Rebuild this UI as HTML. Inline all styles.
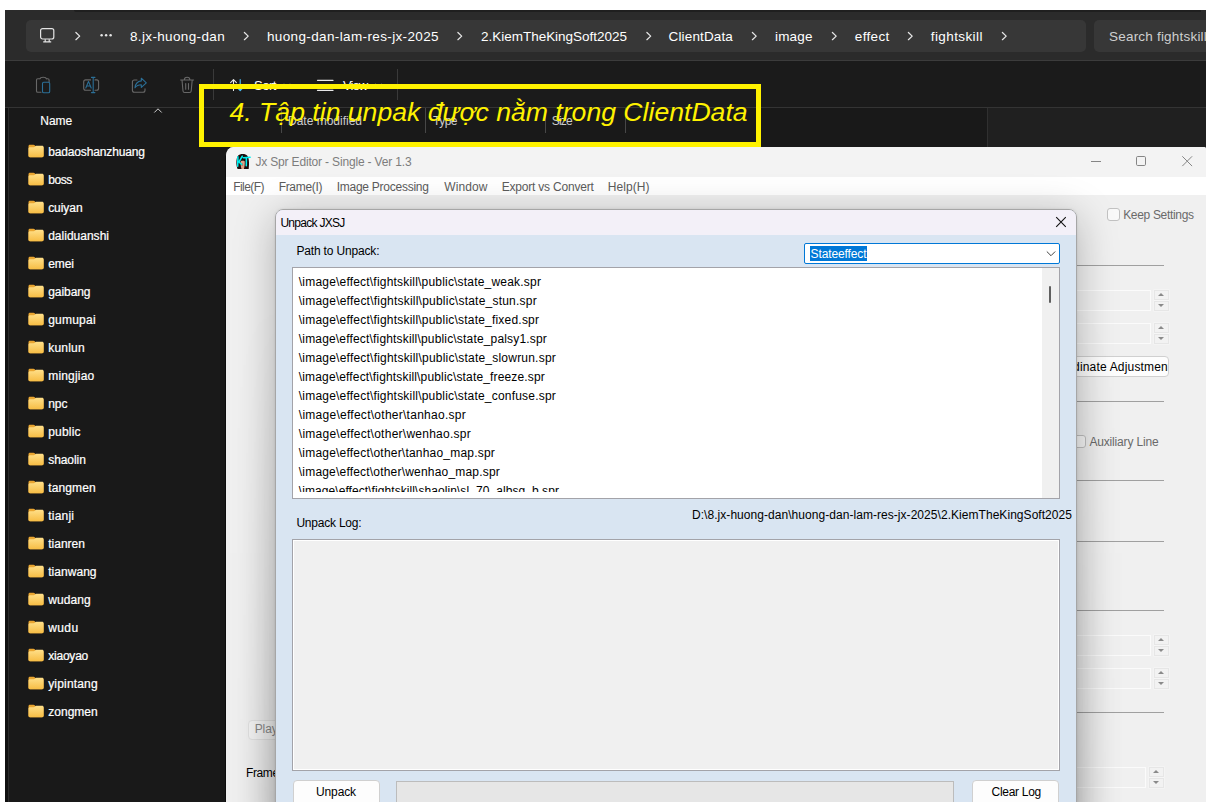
<!DOCTYPE html>
<html lang="vi">
<head>
<meta charset="utf-8">
<title>Jx Spr Editor - Unpack JXSJ</title>
<style>
*{box-sizing:border-box;margin:0;padding:0}
html,body{width:1215px;height:802px;overflow:hidden;background:#fff}
body{position:relative;font-family:"Liberation Sans",Arial,sans-serif;font-size:12px}
.abs{position:absolute}
.t{position:absolute;white-space:pre;line-height:1;font-family:"Liberation Sans",Arial,sans-serif}
#exp{position:absolute;left:5px;top:10px;width:1201px;height:792px;background:#191919;overflow:hidden}
/* inside #exp we shift by (-5,-10) so children use page coords */
#expi{position:absolute;left:-5px;top:-10px;width:1215px;height:802px}
#topbar{left:5px;top:10px;width:1201px;height:50px;background:#2b2b2b}
#tabshade{left:74px;top:10px;width:1127px;height:2px;background:#1f1f1f;border-radius:0 0 0 6px}
#pill{left:26px;top:20px;width:1060px;height:32px;background:#373737;border-radius:5px}
#search{left:1094px;top:20px;width:130px;height:32px;background:#373737;border-radius:5px}
#l60{left:5px;top:60px;width:1201px;height:1px;background:#3c3c3c}
#toolbar{left:5px;top:61px;width:1201px;height:46px;background:#1b1b1b}
#l107{left:5px;top:107px;width:1201px;height:1px;background:#343434}
#lstrip{left:5px;top:108px;width:3px;height:700px;background:#101010}
#lstripl{left:8px;top:108px;width:1px;height:700px;background:#2a2a2a}
#preview{left:987px;top:108px;width:220px;height:50px;background:#202020;border-left:1px solid #303030}
.vsep{position:absolute;width:1px;background:#3a3a3a}
.csep{position:absolute;width:1px;background:#474747;top:108px;height:25px}
.fold{position:absolute;left:28px;width:16px;height:14px}
#ybox{position:absolute;left:198.800px;top:84px;width:562.400px;height:62.7px;border:5px solid #fff200}
#ytext{position:absolute;left:229.500px;top:99px;font:italic 26.620px "Liberation Sans",Arial,sans-serif;color:#fff200;white-space:pre;line-height:1;letter-spacing:0}
#app{position:absolute;left:224.7px;top:147px;width:981.3px;height:655px;background:#f0f0f0;border-radius:8.5px 2px 0 0;overflow:hidden;border-left:1.3px solid #0d0d0d}
#appi{position:absolute;left:-226px;top:-147px;width:1215px;height:802px}
#apptitle{left:226px;top:147px;width:980px;height:30px;background:#f3f3f3}
#appmenu{left:226px;top:177px;width:980px;height:18px;background:#fff}
.hl{position:absolute;height:1px;background:#a0a0a0;left:1076px}
.spf{position:absolute;height:21px;border:1px solid #fbfbfb;background:transparent;left:1000px}
.spb{position:absolute;width:14.500px;height:9.500px;border:1px solid #e6e6e6;background:#f2f2f2;box-shadow:0 0 0 .5px #f8f8f8}
.spb i{position:absolute;left:3.3px;width:0;height:0;border-left:3px solid transparent;border-right:3px solid transparent;box-sizing:content-box}
.spb.u i{top:1.800px;border-bottom:3.600px solid #8a8a8a}
.spb.d i{top:2.200px;border-top:3.600px solid #8a8a8a}
.cb{position:absolute;width:13px;height:13px;border:1px solid #c2c2c2;border-radius:3px;background:#f9f9f9}
#dlg{position:absolute;left:275px;top:209px;width:802px;height:620px;background:#d9e5f2;border:1px solid #a6a6a6;border-radius:8px;overflow:hidden}
#dlgsh{position:absolute;left:275px;top:209px;width:802px;height:620px;border-radius:8px;box-shadow:0 8px 40px rgba(0,0,0,.27),0 0 3px rgba(0,0,0,.10)}
.shx{position:absolute;top:209px;width:50px;height:593px;-webkit-mask-image:linear-gradient(to bottom,transparent 16%,#000 100%);mask-image:linear-gradient(to bottom,transparent 16%,#000 100%)}
#shl{left:225px;background:linear-gradient(to right,rgba(0,0,0,0) 0,rgba(0,0,0,.005) 20%,rgba(0,0,0,.014) 40%,rgba(0,0,0,.034) 60%,rgba(0,0,0,.066) 80%,rgba(0,0,0,.105) 100%)}
#shr{left:1077px;background:linear-gradient(to left,rgba(0,0,0,0) 0,rgba(0,0,0,.005) 20%,rgba(0,0,0,.014) 40%,rgba(0,0,0,.034) 60%,rgba(0,0,0,.066) 80%,rgba(0,0,0,.105) 100%)}
#dlgi{position:absolute;left:-276px;top:-210px;width:1215px;height:802px}
#dlgtitle{left:276px;top:209px;width:801px;height:26px;background:#f3f0f8}
#combo{left:804px;top:243px;width:256px;height:21px;background:#fff;border:1px solid #0078d7;border-radius:2px}
#sel{left:810px;top:246px;width:57px;height:15px;background:#0078d7}
#list{left:292px;top:266.5px;width:768px;height:232px;background:#fff;border:1px solid #a3a3a9}
#listclip{position:absolute;left:293px;top:267.5px;width:748px;height:224px;overflow:hidden}
#sbtrack{left:1042px;top:267.5px;width:17px;height:230px;background:#f0f0f0}
#sbthumb{left:1049px;top:286px;width:2px;height:17px;background:#606060;border-radius:1px}
#log{left:292px;top:539px;width:768px;height:231.5px;background:#f0f0f0;border:1px solid #a3a3a9;box-shadow:inset 0 0 0 1px #fff}
.btn{position:absolute;background:#fdfdfd;border:1px solid #d0d0d0;border-radius:4px}
#prog{left:396px;top:781px;width:558px;height:30px;background:#e6e6e6;border:1px solid #bcbcbc}
</style>
</head>
<body>

<!-- ===================== File Explorer (dark) ===================== -->
<div id="exp"><div id="expi">
  <div class="abs" id="topbar"></div>
  <div class="abs" id="tabshade"></div>
  <div class="abs" id="pill"></div>
  <div class="abs" id="search"></div>
  <div class="abs" id="l60"></div>
  <div class="abs" id="toolbar"></div>
  <div class="abs" id="l107"></div>
  <div class="abs" id="lstrip"></div>
  <div class="abs" id="lstripl"></div>
  <div class="abs" id="preview"></div>

  <!-- monitor icon -->
  <svg class="abs" style="left:39px;top:27px" width="17" height="17" viewBox="0 0 17 17" fill="none" stroke="#e4e4e4" stroke-width="1.2">
    <rect x="1.6" y="1.6" width="13.2" height="10.4" rx="2"/>
    <path d="M6.2 12.2v2.4M10.2 12.2v2.4M4.2 14.9h8"/>
  </svg>
  <!-- breadcrumb chevrons -->
  <svg class="abs" style="left:0;top:0" width="1215" height="60" fill="none" stroke="#e6e6e6" stroke-width="1.25" stroke-linecap="round" stroke-linejoin="round">
    <path d="M75.9 32.5l3.8 3.6-3.8 3.6"/>
    <path d="M244.4 32.5l3.8 3.6-3.8 3.6"/>
    <path d="M457.9 32.5l3.8 3.6-3.8 3.6"/>
    <path d="M646.9 32.5l3.8 3.6-3.8 3.6"/>
    <path d="M752.4 32.5l3.8 3.6-3.8 3.6"/>
    <path d="M832.4 32.5l3.8 3.6-3.8 3.6"/>
    <path d="M908.4 32.5l3.8 3.6-3.8 3.6"/>
    <path d="M1002.4 32.5l3.8 3.6-3.8 3.6"/>
    <g fill="#e6e6e6" stroke="none"><circle cx="101.6" cy="35.200" r="1.25"/><circle cx="106.1" cy="35.200" r="1.25"/><circle cx="110.6" cy="35.200" r="1.25"/></g>
  </svg>

  <!-- toolbar icons (disabled look) -->
  <svg class="abs" style="left:0;top:61px" width="420" height="46" fill="none" stroke-width="1.1" stroke-linecap="round" stroke-linejoin="round">
    <!-- paste -->
    <g stroke="#686868"><path d="M41 31.3h-3.2a1.3 1.3 0 0 1-1.3-1.3V19a1.3 1.3 0 0 1 1.3-1.3h1.7M46.5 17.7h1.3a1.3 1.3 0 0 1 1.3 1.3v2"/><path d="M40 17.8c.2-1.2 1.2-1.6 3.2-1.6s3 .4 3.2 1.6"/></g>
    <rect x="42.5" y="21.3" width="7.2" height="10.4" rx="1.3" stroke="#2b6f97"/>
    <!-- rename -->
    <g stroke="#686868"><path d="M90.5 29.2h-4.8a2 2 0 0 1-2-2v-6.3a2 2 0 0 1 2-2h4.8M95 18.9h1.6a2 2 0 0 1 2 2v6.3a2 2 0 0 1-2 2H95"/></g>
    <g stroke="#2b6f97"><path d="M91.5 16.4h3.4M91.5 31.6h3.4M93.2 16.4v15.2"/><path d="M85.8 27l2.7-6.6L91.2 27M86.7 25h3.6"/></g>
    <!-- share -->
    <g stroke="#686868"><path d="M137 19h-2.6a2 2 0 0 0-2 2v8.2a2 2 0 0 0 2 2h8.6a2 2 0 0 0 2-2v-1.4"/></g>
    <path d="M141.3 17.2l5 4.6-5 4.6v-2.7c-3 0-4.800.9-6.300 3.100.4-3.900 2.500-6.500 6.300-6.900z" stroke="#2b6f97"/>
    <!-- trash -->
    <g stroke="#686868"><path d="M180.600 19h13M184.300 19c0-1.900 1-2.800 2.800-2.800s2.800.9 2.800 2.800M182 19l1 11c.1 1 .7 1.500 1.600 1.500h5c.9 0 1.500-.5 1.600-1.500l1-11M185.700 22.500v5.800M188.500 22.500v5.800"/></g>
    <!-- sort -->
    <path d="M233.500 29.500V18.800M230.600 21.700l2.900-3 2.900 3" stroke="#e8e8e8"/>
    <path d="M240.200 18.500v11M237.300 26.600l2.900 3 2.900-3" stroke="#4cc2ff"/>
    <path d="M284.500 23l2.500 2.500 2.500-2.500M376 23l2.500 2.500 2.500-2.500" stroke="#9a9a9a" stroke-width="1"/>
    <!-- view -->
    <path d="M317.500 19.300h15.500M317.500 24.300h15.500M317.500 29.300h15.500" stroke="#e8e8e8" stroke-width="1.300"/>
  </svg>
  <div class="vsep" style="left:213px;top:69px;height:31px"></div>
  <div class="vsep" style="left:397px;top:69px;height:31px"></div>
  <!-- column sort chevron -->
  <svg class="abs" style="left:152px;top:106px" width="12" height="8" fill="none" stroke="#cfcfcf" stroke-width="1"><path d="M2.300 6.500l3.700-3.700 3.700 3.700"/></svg>
  <div class="csep" style="left:281px"></div>
  <div class="csep" style="left:425px"></div>
  <div class="csep" style="left:545px"></div>
  <div class="csep" style="left:625px"></div>

  <svg class="fold" style="top:143.5px" viewBox="0 0 16 14"><defs><linearGradient id="fg0" x1="0" y1="0" x2="0" y2="1"><stop offset="0" stop-color="#ffe08a"/><stop offset="1" stop-color="#f7bd45"/></linearGradient></defs><path d="M0.500 2.200C0.500 1.400 1.100 0.800 1.900 0.800h3.600c.5 0 .9.200 1.200.5l1.200 1.300h6.300c.8 0 1.400.6 1.400 1.400v7.800c0 .8-.6 1.400-1.400 1.400H1.900c-.8 0-1.400-.6-1.400-1.400z" fill="#e9a530"/><path d="M0.500 4.700c0-.8.600-1.400 1.400-1.400h3.800c.4 0 .8-.2 1.100-.5l.6-.6c.3-.3.700-.4 1.100-.4h5.700c.8 0 1.400.6 1.400 1.400v8.600c0 .8-.6 1.400-1.400 1.400H1.900c-.8 0-1.400-.6-1.400-1.400z" fill="url(#fg0)"/></svg>
<svg class="fold" style="top:171.5px" viewBox="0 0 16 14"><defs><linearGradient id="fg1" x1="0" y1="0" x2="0" y2="1"><stop offset="0" stop-color="#ffe08a"/><stop offset="1" stop-color="#f7bd45"/></linearGradient></defs><path d="M0.500 2.200C0.500 1.400 1.100 0.800 1.900 0.800h3.600c.5 0 .9.200 1.200.5l1.200 1.300h6.300c.8 0 1.400.6 1.400 1.400v7.800c0 .8-.6 1.400-1.400 1.400H1.900c-.8 0-1.400-.6-1.400-1.400z" fill="#e9a530"/><path d="M0.500 4.700c0-.8.600-1.400 1.400-1.400h3.800c.4 0 .8-.2 1.100-.5l.6-.6c.3-.3.700-.4 1.100-.4h5.700c.8 0 1.400.6 1.400 1.400v8.600c0 .8-.6 1.400-1.400 1.400H1.900c-.8 0-1.400-.6-1.400-1.400z" fill="url(#fg1)"/></svg>
<svg class="fold" style="top:199.5px" viewBox="0 0 16 14"><defs><linearGradient id="fg2" x1="0" y1="0" x2="0" y2="1"><stop offset="0" stop-color="#ffe08a"/><stop offset="1" stop-color="#f7bd45"/></linearGradient></defs><path d="M0.500 2.200C0.500 1.400 1.100 0.800 1.900 0.800h3.600c.5 0 .9.200 1.200.5l1.200 1.300h6.300c.8 0 1.400.6 1.400 1.400v7.800c0 .8-.6 1.400-1.400 1.400H1.900c-.8 0-1.400-.6-1.400-1.400z" fill="#e9a530"/><path d="M0.500 4.700c0-.8.600-1.400 1.400-1.400h3.800c.4 0 .8-.2 1.100-.5l.6-.6c.3-.3.700-.4 1.100-.4h5.700c.8 0 1.400.6 1.400 1.400v8.600c0 .8-.6 1.400-1.400 1.400H1.900c-.8 0-1.400-.6-1.400-1.400z" fill="url(#fg2)"/></svg>
<svg class="fold" style="top:227.5px" viewBox="0 0 16 14"><defs><linearGradient id="fg3" x1="0" y1="0" x2="0" y2="1"><stop offset="0" stop-color="#ffe08a"/><stop offset="1" stop-color="#f7bd45"/></linearGradient></defs><path d="M0.500 2.200C0.500 1.400 1.100 0.800 1.900 0.800h3.600c.5 0 .9.200 1.200.5l1.200 1.300h6.300c.8 0 1.400.6 1.400 1.400v7.800c0 .8-.6 1.400-1.400 1.400H1.900c-.8 0-1.400-.6-1.400-1.400z" fill="#e9a530"/><path d="M0.500 4.700c0-.8.600-1.400 1.400-1.400h3.800c.4 0 .8-.2 1.100-.5l.6-.6c.3-.3.700-.4 1.100-.4h5.700c.8 0 1.400.6 1.400 1.400v8.600c0 .8-.6 1.400-1.400 1.400H1.900c-.8 0-1.400-.6-1.400-1.400z" fill="url(#fg3)"/></svg>
<svg class="fold" style="top:255.5px" viewBox="0 0 16 14"><defs><linearGradient id="fg4" x1="0" y1="0" x2="0" y2="1"><stop offset="0" stop-color="#ffe08a"/><stop offset="1" stop-color="#f7bd45"/></linearGradient></defs><path d="M0.500 2.200C0.500 1.400 1.100 0.800 1.900 0.800h3.600c.5 0 .9.200 1.200.5l1.200 1.300h6.300c.8 0 1.400.6 1.400 1.400v7.800c0 .8-.6 1.400-1.400 1.400H1.900c-.8 0-1.400-.6-1.400-1.400z" fill="#e9a530"/><path d="M0.500 4.700c0-.8.600-1.400 1.400-1.400h3.800c.4 0 .8-.2 1.100-.5l.6-.6c.3-.3.700-.4 1.100-.4h5.700c.8 0 1.400.6 1.400 1.400v8.600c0 .8-.6 1.400-1.400 1.400H1.900c-.8 0-1.400-.6-1.400-1.400z" fill="url(#fg4)"/></svg>
<svg class="fold" style="top:283.5px" viewBox="0 0 16 14"><defs><linearGradient id="fg5" x1="0" y1="0" x2="0" y2="1"><stop offset="0" stop-color="#ffe08a"/><stop offset="1" stop-color="#f7bd45"/></linearGradient></defs><path d="M0.500 2.200C0.500 1.400 1.100 0.800 1.900 0.800h3.600c.5 0 .9.200 1.200.5l1.200 1.300h6.300c.8 0 1.400.6 1.400 1.400v7.800c0 .8-.6 1.400-1.400 1.400H1.900c-.8 0-1.400-.6-1.400-1.400z" fill="#e9a530"/><path d="M0.500 4.700c0-.8.600-1.400 1.400-1.400h3.800c.4 0 .8-.2 1.100-.5l.6-.6c.3-.3.700-.4 1.100-.4h5.700c.8 0 1.400.6 1.400 1.400v8.600c0 .8-.6 1.400-1.400 1.400H1.900c-.8 0-1.400-.6-1.400-1.400z" fill="url(#fg5)"/></svg>
<svg class="fold" style="top:311.5px" viewBox="0 0 16 14"><defs><linearGradient id="fg6" x1="0" y1="0" x2="0" y2="1"><stop offset="0" stop-color="#ffe08a"/><stop offset="1" stop-color="#f7bd45"/></linearGradient></defs><path d="M0.500 2.200C0.500 1.400 1.100 0.800 1.900 0.800h3.600c.5 0 .9.200 1.200.5l1.200 1.300h6.300c.8 0 1.400.6 1.400 1.400v7.800c0 .8-.6 1.400-1.400 1.400H1.900c-.8 0-1.400-.6-1.400-1.400z" fill="#e9a530"/><path d="M0.500 4.700c0-.8.600-1.400 1.400-1.400h3.800c.4 0 .8-.2 1.100-.5l.6-.6c.3-.3.700-.4 1.100-.4h5.700c.8 0 1.400.6 1.400 1.400v8.600c0 .8-.6 1.400-1.400 1.400H1.900c-.8 0-1.400-.6-1.400-1.400z" fill="url(#fg6)"/></svg>
<svg class="fold" style="top:339.5px" viewBox="0 0 16 14"><defs><linearGradient id="fg7" x1="0" y1="0" x2="0" y2="1"><stop offset="0" stop-color="#ffe08a"/><stop offset="1" stop-color="#f7bd45"/></linearGradient></defs><path d="M0.500 2.200C0.500 1.400 1.100 0.800 1.900 0.800h3.600c.5 0 .9.200 1.200.5l1.200 1.300h6.300c.8 0 1.400.6 1.400 1.400v7.800c0 .8-.6 1.400-1.400 1.400H1.900c-.8 0-1.400-.6-1.400-1.400z" fill="#e9a530"/><path d="M0.500 4.700c0-.8.600-1.400 1.400-1.400h3.800c.4 0 .8-.2 1.100-.5l.6-.6c.3-.3.700-.4 1.100-.4h5.700c.8 0 1.400.6 1.400 1.400v8.600c0 .8-.6 1.400-1.400 1.400H1.900c-.8 0-1.400-.6-1.400-1.400z" fill="url(#fg7)"/></svg>
<svg class="fold" style="top:367.5px" viewBox="0 0 16 14"><defs><linearGradient id="fg8" x1="0" y1="0" x2="0" y2="1"><stop offset="0" stop-color="#ffe08a"/><stop offset="1" stop-color="#f7bd45"/></linearGradient></defs><path d="M0.500 2.200C0.500 1.400 1.100 0.800 1.900 0.800h3.600c.5 0 .9.200 1.200.5l1.200 1.300h6.300c.8 0 1.400.6 1.400 1.400v7.800c0 .8-.6 1.400-1.400 1.400H1.900c-.8 0-1.400-.6-1.400-1.400z" fill="#e9a530"/><path d="M0.500 4.700c0-.8.600-1.400 1.400-1.400h3.800c.4 0 .8-.2 1.100-.5l.6-.6c.3-.3.700-.4 1.100-.4h5.700c.8 0 1.400.6 1.400 1.400v8.600c0 .8-.6 1.400-1.400 1.400H1.900c-.8 0-1.400-.6-1.400-1.400z" fill="url(#fg8)"/></svg>
<svg class="fold" style="top:395.5px" viewBox="0 0 16 14"><defs><linearGradient id="fg9" x1="0" y1="0" x2="0" y2="1"><stop offset="0" stop-color="#ffe08a"/><stop offset="1" stop-color="#f7bd45"/></linearGradient></defs><path d="M0.500 2.200C0.500 1.400 1.100 0.800 1.900 0.800h3.600c.5 0 .9.200 1.200.5l1.200 1.300h6.300c.8 0 1.400.6 1.400 1.400v7.800c0 .8-.6 1.400-1.400 1.400H1.900c-.8 0-1.400-.6-1.400-1.400z" fill="#e9a530"/><path d="M0.500 4.700c0-.8.600-1.400 1.400-1.400h3.800c.4 0 .8-.2 1.100-.5l.6-.6c.3-.3.700-.4 1.100-.4h5.700c.8 0 1.400.6 1.400 1.400v8.600c0 .8-.6 1.400-1.400 1.400H1.900c-.8 0-1.400-.6-1.400-1.400z" fill="url(#fg9)"/></svg>
<svg class="fold" style="top:423.5px" viewBox="0 0 16 14"><defs><linearGradient id="fg10" x1="0" y1="0" x2="0" y2="1"><stop offset="0" stop-color="#ffe08a"/><stop offset="1" stop-color="#f7bd45"/></linearGradient></defs><path d="M0.500 2.200C0.500 1.400 1.100 0.800 1.900 0.800h3.600c.5 0 .9.200 1.200.5l1.200 1.300h6.300c.8 0 1.400.6 1.400 1.400v7.800c0 .8-.6 1.400-1.400 1.400H1.900c-.8 0-1.400-.6-1.400-1.400z" fill="#e9a530"/><path d="M0.500 4.700c0-.8.600-1.400 1.400-1.400h3.800c.4 0 .8-.2 1.100-.5l.6-.6c.3-.3.700-.4 1.100-.4h5.700c.8 0 1.400.6 1.400 1.400v8.600c0 .8-.6 1.400-1.400 1.400H1.900c-.8 0-1.400-.6-1.400-1.400z" fill="url(#fg10)"/></svg>
<svg class="fold" style="top:451.5px" viewBox="0 0 16 14"><defs><linearGradient id="fg11" x1="0" y1="0" x2="0" y2="1"><stop offset="0" stop-color="#ffe08a"/><stop offset="1" stop-color="#f7bd45"/></linearGradient></defs><path d="M0.500 2.200C0.500 1.400 1.100 0.800 1.900 0.800h3.600c.5 0 .9.200 1.200.5l1.200 1.300h6.300c.8 0 1.400.6 1.400 1.400v7.800c0 .8-.6 1.400-1.400 1.400H1.900c-.8 0-1.400-.6-1.400-1.400z" fill="#e9a530"/><path d="M0.500 4.700c0-.8.600-1.400 1.400-1.400h3.800c.4 0 .8-.2 1.100-.5l.6-.6c.3-.3.700-.4 1.100-.4h5.700c.8 0 1.400.6 1.400 1.400v8.600c0 .8-.6 1.400-1.400 1.400H1.900c-.8 0-1.400-.6-1.400-1.400z" fill="url(#fg11)"/></svg>
<svg class="fold" style="top:479.5px" viewBox="0 0 16 14"><defs><linearGradient id="fg12" x1="0" y1="0" x2="0" y2="1"><stop offset="0" stop-color="#ffe08a"/><stop offset="1" stop-color="#f7bd45"/></linearGradient></defs><path d="M0.500 2.200C0.500 1.400 1.100 0.800 1.900 0.800h3.600c.5 0 .9.200 1.200.5l1.200 1.300h6.300c.8 0 1.400.6 1.400 1.400v7.800c0 .8-.6 1.400-1.400 1.400H1.900c-.8 0-1.400-.6-1.400-1.400z" fill="#e9a530"/><path d="M0.500 4.700c0-.8.600-1.400 1.400-1.400h3.800c.4 0 .8-.2 1.100-.5l.6-.6c.3-.3.700-.4 1.100-.4h5.700c.8 0 1.400.6 1.400 1.400v8.600c0 .8-.6 1.400-1.400 1.400H1.900c-.8 0-1.400-.6-1.400-1.400z" fill="url(#fg12)"/></svg>
<svg class="fold" style="top:507.5px" viewBox="0 0 16 14"><defs><linearGradient id="fg13" x1="0" y1="0" x2="0" y2="1"><stop offset="0" stop-color="#ffe08a"/><stop offset="1" stop-color="#f7bd45"/></linearGradient></defs><path d="M0.500 2.200C0.500 1.400 1.100 0.800 1.900 0.800h3.600c.5 0 .9.200 1.200.5l1.200 1.300h6.300c.8 0 1.400.6 1.400 1.400v7.800c0 .8-.6 1.400-1.400 1.400H1.900c-.8 0-1.400-.6-1.400-1.400z" fill="#e9a530"/><path d="M0.500 4.700c0-.8.600-1.400 1.400-1.400h3.800c.4 0 .8-.2 1.100-.5l.6-.6c.3-.3.700-.4 1.100-.4h5.700c.8 0 1.400.6 1.400 1.400v8.600c0 .8-.6 1.400-1.400 1.400H1.900c-.8 0-1.400-.6-1.400-1.400z" fill="url(#fg13)"/></svg>
<svg class="fold" style="top:535.5px" viewBox="0 0 16 14"><defs><linearGradient id="fg14" x1="0" y1="0" x2="0" y2="1"><stop offset="0" stop-color="#ffe08a"/><stop offset="1" stop-color="#f7bd45"/></linearGradient></defs><path d="M0.500 2.200C0.500 1.400 1.100 0.800 1.900 0.800h3.600c.5 0 .9.200 1.200.5l1.200 1.300h6.300c.8 0 1.400.6 1.400 1.400v7.800c0 .8-.6 1.400-1.400 1.400H1.900c-.8 0-1.400-.6-1.400-1.400z" fill="#e9a530"/><path d="M0.500 4.700c0-.8.600-1.400 1.400-1.400h3.800c.4 0 .8-.2 1.100-.5l.6-.6c.3-.3.700-.4 1.100-.4h5.700c.8 0 1.400.6 1.400 1.400v8.600c0 .8-.6 1.400-1.400 1.400H1.900c-.8 0-1.400-.6-1.400-1.400z" fill="url(#fg14)"/></svg>
<svg class="fold" style="top:563.5px" viewBox="0 0 16 14"><defs><linearGradient id="fg15" x1="0" y1="0" x2="0" y2="1"><stop offset="0" stop-color="#ffe08a"/><stop offset="1" stop-color="#f7bd45"/></linearGradient></defs><path d="M0.500 2.200C0.500 1.400 1.100 0.800 1.900 0.800h3.600c.5 0 .9.200 1.200.5l1.200 1.300h6.300c.8 0 1.400.6 1.400 1.400v7.800c0 .8-.6 1.400-1.400 1.400H1.900c-.8 0-1.400-.6-1.400-1.400z" fill="#e9a530"/><path d="M0.500 4.700c0-.8.600-1.400 1.400-1.400h3.800c.4 0 .8-.2 1.100-.5l.6-.6c.3-.3.700-.4 1.100-.4h5.700c.8 0 1.400.6 1.400 1.400v8.600c0 .8-.6 1.400-1.400 1.400H1.900c-.8 0-1.400-.6-1.400-1.400z" fill="url(#fg15)"/></svg>
<svg class="fold" style="top:591.5px" viewBox="0 0 16 14"><defs><linearGradient id="fg16" x1="0" y1="0" x2="0" y2="1"><stop offset="0" stop-color="#ffe08a"/><stop offset="1" stop-color="#f7bd45"/></linearGradient></defs><path d="M0.500 2.200C0.500 1.400 1.100 0.800 1.900 0.800h3.600c.5 0 .9.200 1.200.5l1.200 1.300h6.300c.8 0 1.400.6 1.400 1.400v7.800c0 .8-.6 1.400-1.400 1.400H1.900c-.8 0-1.400-.6-1.400-1.400z" fill="#e9a530"/><path d="M0.500 4.700c0-.8.600-1.400 1.400-1.400h3.800c.4 0 .8-.2 1.100-.5l.6-.6c.3-.3.700-.4 1.100-.4h5.700c.8 0 1.400.6 1.400 1.400v8.600c0 .8-.6 1.400-1.400 1.400H1.900c-.8 0-1.400-.6-1.400-1.400z" fill="url(#fg16)"/></svg>
<svg class="fold" style="top:619.5px" viewBox="0 0 16 14"><defs><linearGradient id="fg17" x1="0" y1="0" x2="0" y2="1"><stop offset="0" stop-color="#ffe08a"/><stop offset="1" stop-color="#f7bd45"/></linearGradient></defs><path d="M0.500 2.200C0.500 1.400 1.100 0.800 1.900 0.800h3.600c.5 0 .9.200 1.200.5l1.200 1.300h6.300c.8 0 1.400.6 1.400 1.400v7.800c0 .8-.6 1.400-1.400 1.400H1.900c-.8 0-1.400-.6-1.400-1.400z" fill="#e9a530"/><path d="M0.500 4.700c0-.8.600-1.400 1.400-1.400h3.800c.4 0 .8-.2 1.100-.5l.6-.6c.3-.3.700-.4 1.100-.4h5.700c.8 0 1.400.6 1.400 1.400v8.600c0 .8-.6 1.400-1.400 1.400H1.900c-.8 0-1.400-.6-1.400-1.400z" fill="url(#fg17)"/></svg>
<svg class="fold" style="top:647.5px" viewBox="0 0 16 14"><defs><linearGradient id="fg18" x1="0" y1="0" x2="0" y2="1"><stop offset="0" stop-color="#ffe08a"/><stop offset="1" stop-color="#f7bd45"/></linearGradient></defs><path d="M0.500 2.200C0.500 1.400 1.100 0.800 1.900 0.800h3.600c.5 0 .9.200 1.200.5l1.200 1.300h6.300c.8 0 1.400.6 1.400 1.400v7.800c0 .8-.6 1.400-1.400 1.400H1.900c-.8 0-1.400-.6-1.400-1.400z" fill="#e9a530"/><path d="M0.500 4.700c0-.8.600-1.400 1.400-1.400h3.800c.4 0 .8-.2 1.100-.5l.6-.6c.3-.3.700-.4 1.100-.4h5.700c.8 0 1.400.6 1.400 1.400v8.600c0 .8-.6 1.400-1.400 1.400H1.900c-.8 0-1.400-.6-1.400-1.400z" fill="url(#fg18)"/></svg>
<svg class="fold" style="top:675.5px" viewBox="0 0 16 14"><defs><linearGradient id="fg19" x1="0" y1="0" x2="0" y2="1"><stop offset="0" stop-color="#ffe08a"/><stop offset="1" stop-color="#f7bd45"/></linearGradient></defs><path d="M0.500 2.200C0.500 1.400 1.100 0.800 1.900 0.800h3.600c.5 0 .9.200 1.200.5l1.200 1.300h6.300c.8 0 1.400.6 1.400 1.400v7.800c0 .8-.6 1.400-1.400 1.400H1.900c-.8 0-1.400-.6-1.400-1.400z" fill="#e9a530"/><path d="M0.500 4.700c0-.8.600-1.400 1.400-1.400h3.800c.4 0 .8-.2 1.100-.5l.6-.6c.3-.3.700-.4 1.100-.4h5.700c.8 0 1.400.6 1.400 1.400v8.600c0 .8-.6 1.400-1.400 1.400H1.900c-.8 0-1.400-.6-1.400-1.400z" fill="url(#fg19)"/></svg>
<svg class="fold" style="top:703.5px" viewBox="0 0 16 14"><defs><linearGradient id="fg20" x1="0" y1="0" x2="0" y2="1"><stop offset="0" stop-color="#ffe08a"/><stop offset="1" stop-color="#f7bd45"/></linearGradient></defs><path d="M0.500 2.200C0.500 1.400 1.100 0.800 1.900 0.800h3.600c.5 0 .9.200 1.200.5l1.200 1.300h6.300c.8 0 1.400.6 1.400 1.400v7.800c0 .8-.6 1.400-1.400 1.400H1.900c-.8 0-1.400-.6-1.400-1.400z" fill="#e9a530"/><path d="M0.500 4.700c0-.8.600-1.400 1.400-1.400h3.800c.4 0 .8-.2 1.100-.5l.6-.6c.3-.3.700-.4 1.100-.4h5.700c.8 0 1.400.6 1.400 1.400v8.600c0 .8-.6 1.400-1.400 1.400H1.900c-.8 0-1.400-.6-1.400-1.400z" fill="url(#fg20)"/></svg>
<span class="t" style="left:130.0px;top:29.8px;font-size:13.5px;color:#ffffff;letter-spacing:0.352px;">8.jx-huong-dan</span>
<span class="t" style="left:267.0px;top:29.8px;font-size:13.5px;color:#ffffff;letter-spacing:0.366px;">huong-dan-lam-res-jx-2025</span>
<span class="t" style="left:481.0px;top:29.8px;font-size:13.5px;color:#ffffff;letter-spacing:-0.017px;">2.KiemTheKingSoft2025</span>
<span class="t" style="left:668.6px;top:29.8px;font-size:13.5px;color:#ffffff;letter-spacing:0.137px;">ClientData</span>
<span class="t" style="left:775.0px;top:29.8px;font-size:13.5px;color:#ffffff;letter-spacing:0.184px;">image</span>
<span class="t" style="left:854.8px;top:29.8px;font-size:13.5px;color:#ffffff;letter-spacing:0.353px;">effect</span>
<span class="t" style="left:930.8px;top:29.8px;font-size:13.5px;color:#ffffff;letter-spacing:0.398px;">fightskill</span>
<span class="t" style="left:1109.0px;top:29.8px;font-size:13.5px;color:#cfcfcf;letter-spacing:0.203px;">Search fightskill</span>
<span class="t" style="left:254.0px;top:78.8px;font-size:13px;color:#ffffff;letter-spacing:-0.461px;">Sort</span>
<span class="t" style="left:343.0px;top:78.8px;font-size:13px;color:#ffffff;letter-spacing:-0.900px;">View</span>
<span class="t" style="left:40.3px;top:114.7px;font-size:12px;color:#ffffff;letter-spacing:-0.079px;-webkit-text-stroke:.15px #fff;">Name</span>
<span class="t" style="left:288.0px;top:114.7px;font-size:12px;color:#cdcdcd;letter-spacing:-0.004px;">Date modified</span>
<span class="t" style="left:433.0px;top:114.7px;font-size:12px;color:#cdcdcd;letter-spacing:-0.504px;">Type</span>
<span class="t" style="left:551.7px;top:114.7px;font-size:12px;color:#cdcdcd;letter-spacing:-0.761px;">Size</span>
<span class="t" style="left:48.2px;top:145.7px;font-size:12px;color:#ffffff;letter-spacing:-0.138px;-webkit-text-stroke:.22px #fff;">badaoshanzhuang</span>
<span class="t" style="left:48.2px;top:173.7px;font-size:12px;color:#ffffff;letter-spacing:-0.390px;-webkit-text-stroke:.22px #fff;">boss</span>
<span class="t" style="left:48.2px;top:201.7px;font-size:12px;color:#ffffff;letter-spacing:-0.065px;-webkit-text-stroke:.22px #fff;">cuiyan</span>
<span class="t" style="left:48.2px;top:229.7px;font-size:12px;color:#ffffff;letter-spacing:0.007px;-webkit-text-stroke:.22px #fff;">daliduanshi</span>
<span class="t" style="left:48.2px;top:257.7px;font-size:12px;color:#ffffff;letter-spacing:-0.054px;-webkit-text-stroke:.22px #fff;">emei</span>
<span class="t" style="left:48.2px;top:285.7px;font-size:12px;color:#ffffff;letter-spacing:-0.060px;-webkit-text-stroke:.22px #fff;">gaibang</span>
<span class="t" style="left:48.2px;top:313.7px;font-size:12px;color:#ffffff;letter-spacing:0.224px;-webkit-text-stroke:.22px #fff;">gumupai</span>
<span class="t" style="left:48.2px;top:341.7px;font-size:12px;color:#ffffff;letter-spacing:0.221px;-webkit-text-stroke:.22px #fff;">kunlun</span>
<span class="t" style="left:48.2px;top:369.7px;font-size:12px;color:#ffffff;letter-spacing:0.200px;-webkit-text-stroke:.22px #fff;">mingjiao</span>
<span class="t" style="left:48.2px;top:397.7px;font-size:12px;color:#ffffff;letter-spacing:-0.053px;-webkit-text-stroke:.22px #fff;">npc</span>
<span class="t" style="left:48.2px;top:425.7px;font-size:12px;color:#ffffff;letter-spacing:0.190px;-webkit-text-stroke:.22px #fff;">public</span>
<span class="t" style="left:48.2px;top:453.7px;font-size:12px;color:#ffffff;letter-spacing:-0.062px;-webkit-text-stroke:.22px #fff;">shaolin</span>
<span class="t" style="left:48.2px;top:481.7px;font-size:12px;color:#ffffff;letter-spacing:0.142px;-webkit-text-stroke:.22px #fff;">tangmen</span>
<span class="t" style="left:48.2px;top:509.7px;font-size:12px;color:#ffffff;letter-spacing:0.219px;-webkit-text-stroke:.22px #fff;">tianji</span>
<span class="t" style="left:48.2px;top:537.7px;font-size:12px;color:#ffffff;letter-spacing:0.014px;-webkit-text-stroke:.22px #fff;">tianren</span>
<span class="t" style="left:48.2px;top:565.7px;font-size:12px;color:#ffffff;letter-spacing:0.044px;-webkit-text-stroke:.22px #fff;">tianwang</span>
<span class="t" style="left:48.2px;top:593.7px;font-size:12px;color:#ffffff;letter-spacing:0.092px;-webkit-text-stroke:.22px #fff;">wudang</span>
<span class="t" style="left:48.2px;top:621.7px;font-size:12px;color:#ffffff;letter-spacing:0.403px;-webkit-text-stroke:.22px #fff;">wudu</span>
<span class="t" style="left:48.2px;top:649.7px;font-size:12px;color:#ffffff;letter-spacing:-0.211px;-webkit-text-stroke:.22px #fff;">xiaoyao</span>
<span class="t" style="left:48.2px;top:677.7px;font-size:12px;color:#ffffff;letter-spacing:0.173px;-webkit-text-stroke:.22px #fff;">yipintang</span>
<span class="t" style="left:48.2px;top:705.7px;font-size:12px;color:#ffffff;letter-spacing:0.032px;-webkit-text-stroke:.22px #fff;">zongmen</span>
</div></div>

<!-- ===================== Yellow annotation ===================== -->
<div id="ybox"></div>
<div id="ytext">4. Tập tin unpak được nằm trong ClientData</div>

<!-- ===================== Jx Spr Editor window ===================== -->
<div id="app"><div id="appi">
  <div class="abs" id="apptitle"></div>
  <div class="abs" id="appmenu"></div>
  <!-- app icon -->
  <svg class="abs" style="left:235px;top:153px" width="17" height="17" viewBox="0 0 17 17">
    <path d="M2.600 16.100C.9 12.500.9 5.500 3 2.800 4.800.5 10.600.4 12.300 2.800c2.200 3 1.900 9.600 1.400 13.300z" fill="#1c0b0b"/>
    <path d="M5.700 8.200c1-.5 3-.5 4 0 .3 2.600-.1 5.500-.8 7.900H6.500c-.7-2.200-1.100-5.300-.8-7.900z" fill="#dfa085"/>
    <path d="M7.200 10.300v2.600" stroke="#9a5a48" stroke-width=".8" fill="none"/>
    <path d="M2.900 3.700l-.2 9.500M7.300 3.200L3.900 9l2.800 2.400M8.300 4.800l6.800-.5M11.400 4.800l-.1 8" stroke="#00efef" stroke-width="1.550" fill="none" stroke-linecap="round" stroke-linejoin="round"/>
  </svg>
  <!-- caption buttons -->
  <svg class="abs" style="left:1085px;top:150px" width="115" height="22" fill="none" stroke="#858585" stroke-width="1">
    <path d="M6 11.500h10"/>
    <rect x="51.500" y="6.500" width="9" height="9" rx="1.200"/>
    <path d="M97.300 6.300l9.800 9.800M107.100 6.300l-9.800 9.800"/>
  </svg>

  <div class="cb" style="left:1107px;top:208px"></div>
  <div class="cb" style="left:1073px;top:435px"></div>

  <div class="hl" style="top:265px;width:88px"></div>
  <div class="hl" style="top:401px;width:88px"></div>
  <div class="hl" style="top:480px;width:88px"></div>
  <div class="hl" style="top:541px;width:88px"></div>
  <div class="hl" style="top:610px;width:88px"></div>
  <div class="hl" style="top:712px;width:88px"></div>

  <div class="spf" style="top:290px;width:151px"></div>
  <div class="spb u" style="left:1154.5px;top:290px"><i></i></div>
  <div class="spb d" style="left:1154.5px;top:301px"><i></i></div>
  <div class="spf" style="top:323px;width:151px"></div>
  <div class="spb u" style="left:1154.5px;top:323px"><i></i></div>
  <div class="spb d" style="left:1154.5px;top:334px"><i></i></div>
  <div class="spf" style="top:635px;width:151px"></div>
  <div class="spb u" style="left:1154.5px;top:635px"><i></i></div>
  <div class="spb d" style="left:1154.5px;top:646px"><i></i></div>
  <div class="spf" style="top:668px;width:151px"></div>
  <div class="spb u" style="left:1154.5px;top:668px"><i></i></div>
  <div class="spb d" style="left:1154.5px;top:679px"><i></i></div>
  <div class="spf" style="top:767px;width:146px"></div>
  <div class="spb u" style="left:1149.5px;top:767px"><i></i></div>
  <div class="spb d" style="left:1149.5px;top:778px"><i></i></div>

  <div class="btn" style="left:1000px;top:356px;width:169px;height:21px;background:#fdfdfd;border-color:#d0d0d0;overflow:hidden">
    <span class="t" style="right:-3.800px;top:3.700px;font-size:12px;color:#000;letter-spacing:.18px">Coordinate Adjustment</span>
  </div>
  <div class="btn" style="left:248px;top:720px;width:60px;height:20px;background:#f6f6f6;border-color:#e3e3e3"></div>
<span class="t" style="left:255.7px;top:155.5px;font-size:12px;color:#7d7d7d;letter-spacing:-0.166px;">Jx Spr Editor - Single - Ver 1.3</span>
<span class="t" style="left:233.5px;top:180.9px;font-size:12px;color:#5c5c5c;letter-spacing:-0.539px;">File(F)</span>
<span class="t" style="left:279.0px;top:180.9px;font-size:12px;color:#5c5c5c;letter-spacing:-0.325px;">Frame(I)</span>
<span class="t" style="left:337.0px;top:180.9px;font-size:12px;color:#5c5c5c;letter-spacing:-0.253px;">Image Processing</span>
<span class="t" style="left:444.6px;top:180.9px;font-size:12px;color:#5c5c5c;letter-spacing:0.085px;">Window</span>
<span class="t" style="left:502.0px;top:180.9px;font-size:12px;color:#5c5c5c;letter-spacing:-0.199px;">Export vs Convert</span>
<span class="t" style="left:608.0px;top:180.9px;font-size:12px;color:#5c5c5c;letter-spacing:0.094px;">Help(H)</span>
<span class="t" style="left:1123.5px;top:209.1px;font-size:12px;color:#6a6a6a;letter-spacing:-0.325px;">Keep Settings</span>
<span class="t" style="left:1089.7px;top:436.4px;font-size:12px;color:#6a6a6a;letter-spacing:-0.163px;">Auxiliary Line</span>
<span class="t" style="left:255.0px;top:723.3px;font-size:12px;color:#8a8a8a;letter-spacing:-0.086px;">Play</span>
<span class="t" style="left:246.4px;top:766.5px;font-size:12px;color:#000;letter-spacing:-0.414px;">Frame</span>
</div></div>

<!-- ===================== Unpack JXSJ dialog ===================== -->
<div id="dlgsh"></div><div class="shx" id="shl"></div><div class="shx" id="shr"></div>
<div id="dlg"><div id="dlgi">
  <div class="abs" id="dlgtitle"></div>
  <svg class="abs" style="left:1052px;top:213px" width="18" height="18" fill="none" stroke="#111" stroke-width="1.100"><path d="M4.200 4.200l9.600 9.600M13.800 4.200l-9.600 9.600"/></svg>
  <div class="abs" id="combo"></div>
  <div class="abs" id="sel"></div>
  <svg class="abs" style="left:1044px;top:248px" width="14" height="12" fill="none" stroke="#444" stroke-width="1"><path d="M2.800 3.500l4.200 4.200 4.200-4.200"/></svg>
  <div class="abs" id="list"></div>
  <div class="abs" id="sbtrack"></div>
  <div class="abs" id="sbthumb"></div>
  <div id="listclip">
<span class="t" style="left:5.8px;top:8.7px;font-size:12px;color:#000;letter-spacing:0.197px;">\image\effect\fightskill\public\state_weak.spr</span>
<span class="t" style="left:5.8px;top:27.7px;font-size:12px;color:#000;letter-spacing:0.222px;">\image\effect\fightskill\public\state_stun.spr</span>
<span class="t" style="left:5.8px;top:46.7px;font-size:12px;color:#000;letter-spacing:0.209px;">\image\effect\fightskill\public\state_fixed.spr</span>
<span class="t" style="left:5.8px;top:65.7px;font-size:12px;color:#000;letter-spacing:0.173px;">\image\effect\fightskill\public\state_palsy1.spr</span>
<span class="t" style="left:5.8px;top:84.7px;font-size:12px;color:#000;letter-spacing:0.217px;">\image\effect\fightskill\public\state_slowrun.spr</span>
<span class="t" style="left:5.8px;top:103.7px;font-size:12px;color:#000;letter-spacing:0.159px;">\image\effect\fightskill\public\state_freeze.spr</span>
<span class="t" style="left:5.8px;top:122.7px;font-size:12px;color:#000;letter-spacing:0.203px;">\image\effect\fightskill\public\state_confuse.spr</span>
<span class="t" style="left:5.8px;top:141.7px;font-size:12px;color:#000;letter-spacing:0.266px;">\image\effect\other\tanhao.spr</span>
<span class="t" style="left:5.8px;top:160.7px;font-size:12px;color:#000;letter-spacing:0.255px;">\image\effect\other\wenhao.spr</span>
<span class="t" style="left:5.8px;top:179.7px;font-size:12px;color:#000;letter-spacing:0.205px;">\image\effect\other\tanhao_map.spr</span>
<span class="t" style="left:5.8px;top:198.7px;font-size:12px;color:#000;letter-spacing:0.195px;">\image\effect\other\wenhao_map.spr</span>
<span class="t" style="left:5.8px;top:217.7px;font-size:12px;color:#000;letter-spacing:0.072px;">\image\effect\fightskill\shaolin\sl_70_albsg_b.spr</span>
  </div>
  <div class="abs" id="log"></div>
  <div class="btn" style="left:292.500px;top:779.500px;width:87px;height:30px"></div>
  <div class="abs" id="prog"></div>
  <div class="btn" style="left:972px;top:779.500px;width:87px;height:30px"></div>
<span class="t" style="left:280.4px;top:217.2px;font-size:12px;color:#000;letter-spacing:-0.712px;">Unpack JXSJ</span>
<span class="t" style="left:296.4px;top:244.5px;font-size:12px;color:#000;letter-spacing:-0.159px;">Path to Unpack:</span>
<span class="t" style="left:810.5px;top:247.8px;font-size:12px;color:#fff;letter-spacing:-0.105px;">Stateeffect</span>
<span class="t" style="left:296.4px;top:516.7px;font-size:12px;color:#000;letter-spacing:-0.217px;">Unpack Log:</span>
<span class="t" style="left:692.0px;top:508.5px;font-size:12px;color:#000;letter-spacing:0.048px;">D:\8.jx-huong-dan\huong-dan-lam-res-jx-2025\2.KiemTheKingSoft2025</span>
<span class="t" style="left:316.0px;top:786.1px;font-size:12px;color:#000;letter-spacing:-0.115px;">Unpack</span>
<span class="t" style="left:991.5px;top:786.1px;font-size:12px;color:#000;letter-spacing:-0.281px;">Clear Log</span>
</div></div>

</body>
</html>
